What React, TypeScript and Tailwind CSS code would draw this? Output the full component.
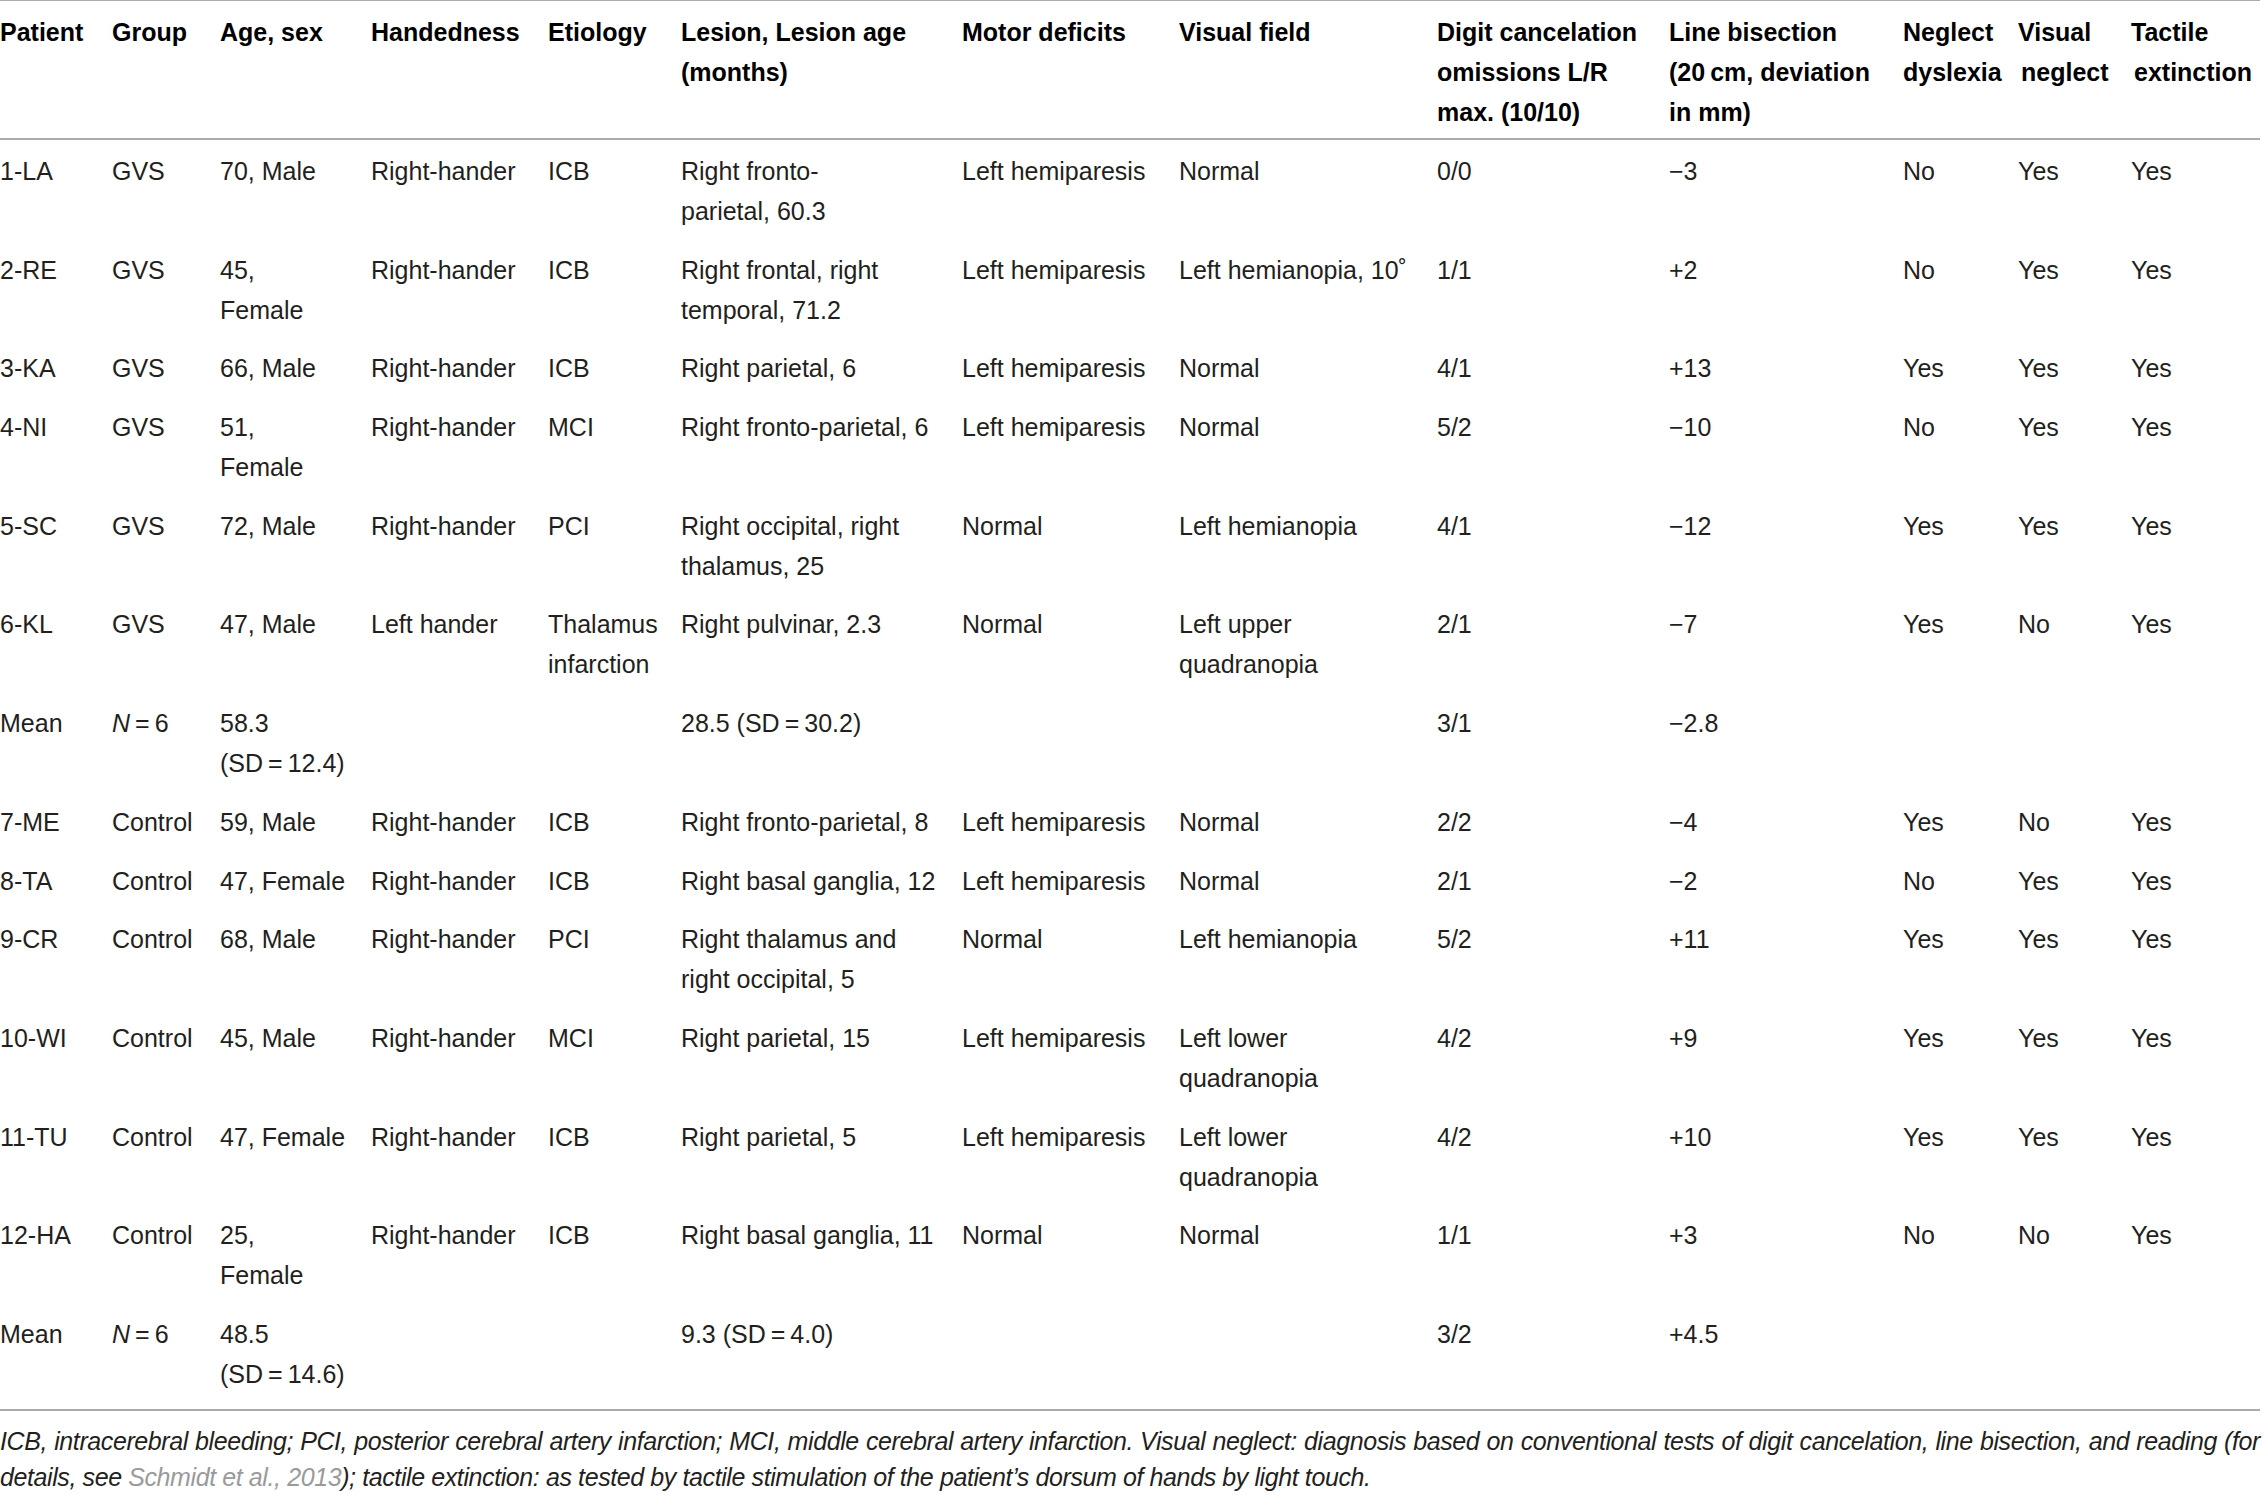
import React from "react";

type Cell = React.ReactNode[];

const GRID =
  "grid grid-cols-[112px_108px_151px_177px_133px_281px_217px_258px_232px_234px_115px_113px_1fr]";

const M = "\u2212";
const T = "\u2009";

const N6 = (
  <span>
    <i>N</i>
    {T}={T}6
  </span>
);

const header: Cell[] = [
  ["Patient"],
  ["Group"],
  ["Age, sex"],
  ["Handedness"],
  ["Etiology"],
  ["Lesion, Lesion age", "(months)"],
  ["Motor deficits"],
  ["Visual field"],
  ["Digit cancelation", "omissions L/R", "max. (10/10)"],
  ["Line bisection", `(20${T}cm, deviation`, "in mm)"],
  ["Neglect", "dyslexia"],
  ["Visual", <span className="ml-[3px]">neglect</span>],
  ["Tactile", <span className="ml-[3px]">extinction</span>],
];

const rows: Cell[][] = [
  [["1-LA"], ["GVS"], ["70, Male"], ["Right-hander"], ["ICB"], ["Right fronto-", "parietal, 60.3"], ["Left hemiparesis"], ["Normal"], ["0/0"], [`${M}3`], ["No"], ["Yes"], ["Yes"]],
  [["2-RE"], ["GVS"], ["45,", "Female"], ["Right-hander"], ["ICB"], ["Right frontal, right", "temporal, 71.2"], ["Left hemiparesis"], ["Left hemianopia, 10\u02da"], ["1/1"], ["+2"], ["No"], ["Yes"], ["Yes"]],
  [["3-KA"], ["GVS"], ["66, Male"], ["Right-hander"], ["ICB"], ["Right parietal, 6"], ["Left hemiparesis"], ["Normal"], ["4/1"], ["+13"], ["Yes"], ["Yes"], ["Yes"]],
  [["4-NI"], ["GVS"], ["51,", "Female"], ["Right-hander"], ["MCI"], ["Right fronto-parietal, 6"], ["Left hemiparesis"], ["Normal"], ["5/2"], [`${M}10`], ["No"], ["Yes"], ["Yes"]],
  [["5-SC"], ["GVS"], ["72, Male"], ["Right-hander"], ["PCI"], ["Right occipital, right", "thalamus, 25"], ["Normal"], ["Left hemianopia"], ["4/1"], [`${M}12`], ["Yes"], ["Yes"], ["Yes"]],
  [["6-KL"], ["GVS"], ["47, Male"], ["Left hander"], ["Thalamus", "infarction"], ["Right pulvinar, 2.3"], ["Normal"], ["Left upper", "quadranopia"], ["2/1"], [`${M}7`], ["Yes"], ["No"], ["Yes"]],
  [["Mean"], [N6], ["58.3", `(SD${T}=${T}12.4)`], [], [], [`28.5 (SD${T}=${T}30.2)`], [], [], ["3/1"], [`${M}2.8`], [], [], []],
  [["7-ME"], ["Control"], ["59, Male"], ["Right-hander"], ["ICB"], ["Right fronto-parietal, 8"], ["Left hemiparesis"], ["Normal"], ["2/2"], [`${M}4`], ["Yes"], ["No"], ["Yes"]],
  [["8-TA"], ["Control"], ["47, Female"], ["Right-hander"], ["ICB"], ["Right basal ganglia, 12"], ["Left hemiparesis"], ["Normal"], ["2/1"], [`${M}2`], ["No"], ["Yes"], ["Yes"]],
  [["9-CR"], ["Control"], ["68, Male"], ["Right-hander"], ["PCI"], ["Right thalamus and", "right occipital, 5"], ["Normal"], ["Left hemianopia"], ["5/2"], ["+11"], ["Yes"], ["Yes"], ["Yes"]],
  [["10-WI"], ["Control"], ["45, Male"], ["Right-hander"], ["MCI"], ["Right parietal, 15"], ["Left hemiparesis"], ["Left lower", "quadranopia"], ["4/2"], ["+9"], ["Yes"], ["Yes"], ["Yes"]],
  [["11-TU"], ["Control"], ["47, Female"], ["Right-hander"], ["ICB"], ["Right parietal, 5"], ["Left hemiparesis"], ["Left lower", "quadranopia"], ["4/2"], ["+10"], ["Yes"], ["Yes"], ["Yes"]],
  [["12-HA"], ["Control"], ["25,", "Female"], ["Right-hander"], ["ICB"], ["Right basal ganglia, 11"], ["Normal"], ["Normal"], ["1/1"], ["+3"], ["No"], ["No"], ["Yes"]],
  [["Mean"], [N6], ["48.5", `(SD${T}=${T}14.6)`], [], [], [`9.3 (SD${T}=${T}4.0)`], [], [], ["3/2"], ["+4.5"], [], [], []],
];

function CellView({ lines }: { lines: React.ReactNode[] }) {
  return (
    <div className="flex flex-col whitespace-nowrap">
      {lines.map((l, i) => (
        <div key={i} className="h-[40px] leading-[40px]">
          {l}
        </div>
      ))}
    </div>
  );
}

export default function App() {
  return (
    <div
      className="w-[2263px] h-[1495px] overflow-hidden bg-white text-[#231f20]"
      style={{ fontFamily: '"Liberation Sans", Arial, sans-serif' }}
    >
      <div className="w-[2260px]">
        <div className={`${GRID} border-t border-b-2 border-[#ababab] pt-[11px] pb-[6px] text-[25px] font-bold text-black`}>
          {header.map((c, i) => (
            <CellView key={i} lines={c} />
          ))}
        </div>
        <div className="border-b-2 border-[#ababab] pb-[7px]">
          {rows.map((r, ri) => (
            <div key={ri} className={`${GRID} pt-[11px] pb-[7.7px] text-[25px]`}>
              {r.map((c, ci) => (
                <CellView key={ci} lines={c} />
              ))}
            </div>
          ))}
        </div>
        <div className="pt-[12px] text-[25px] italic leading-[36px] tracking-[-0.4px]">
          <div className="whitespace-nowrap text-justify [text-align-last:justify] w-[2260px]">
            ICB, intracerebral bleeding; PCI, posterior cerebral artery infarction; MCI, middle cerebral artery
            infarction. Visual neglect: diagnosis based on conventional tests of digit cancelation, line bisection, and
            reading (for
          </div>
          <div className="whitespace-nowrap">
            details, see <span className="text-[#9a9a9a]">Schmidt et al., 2013</span>); tactile extinction: as tested by
            tactile stimulation of the patient’s dorsum of hands by light touch.
          </div>
        </div>
      </div>
    </div>
  );
}
